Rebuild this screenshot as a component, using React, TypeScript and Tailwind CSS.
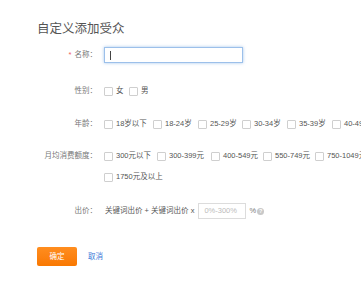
import React from "react";

const font = { fontFamily: '"Liberation Sans", "Noto Sans CJK SC", sans-serif' };

function Check({ label, w }: { label: string; w?: string }) {
  return (
    <div className={`flex items-center shrink-0 ${w ?? ""}`}>
      <span className="w-[9px] h-[9px] border border-[#cfcfcf] bg-white rounded-[1px] shrink-0" />
      <span className="ml-[3px] text-[7.5px] leading-[12px] text-[#555] whitespace-nowrap">{label}</span>
    </div>
  );
}

function Label({ children }: { children: React.ReactNode }) {
  return (
    <div className="w-[60px] shrink-0 text-right text-[7.5px] leading-[12px] text-[#777] whitespace-nowrap">
      {children}
    </div>
  );
}

export default function App() {
  return (
    <div className="w-[361px] h-[287px] bg-white overflow-hidden pl-[37px] pt-[20px]" style={font}>
      <div className="text-[12.5px] leading-[18px] h-[18px] text-[#555]">自定义添加受众</div>

      <div className="mt-[9px] flex items-center gap-[7px] h-[16px]">
        <Label>
          <span className="text-[#f06060] mr-[3px]">*</span>名称：
        </Label>
        <div className="w-[139px] h-[16px] border border-[#9cc0ea] shadow-[0_0_3px_rgba(90,150,220,0.55)] bg-white flex items-center pl-[5px]">
          <span className="w-px h-[9px] bg-[#444]" />
        </div>
      </div>

      <div className="mt-[22px] flex items-center gap-[7px] h-[12px]">
        <Label>性别：</Label>
        <div className="flex items-center gap-[4px]">
          <Check label="女" w="w-[21px]" />
          <Check label="男" />
        </div>
      </div>

      <div className="mt-[21px] flex items-center gap-[7px] h-[12px]">
        <Label>年龄：</Label>
        <div className="flex items-center">
          <Check label="18岁以下" w="w-[49px]" />
          <Check label="18-24岁" w="w-[45px]" />
          <Check label="25-29岁" w="w-[44px]" />
          <Check label="30-34岁" w="w-[45px]" />
          <Check label="35-39岁" w="w-[45px]" />
          <Check label="40-49岁" />
        </div>
      </div>

      <div className="mt-[20px] flex items-start gap-[7px]">
        <Label>月均消费额度：</Label>
        <div className="flex flex-col gap-[9px]">
          <div className="flex items-center h-[12px]">
            <Check label="300元以下" w="w-[53px]" />
            <Check label="300-399元" w="w-[54px]" />
            <Check label="400-549元" w="w-[52px]" />
            <Check label="550-749元" w="w-[52px]" />
            <Check label="750-1049元" />
          </div>
          <div className="flex items-center h-[12px]">
            <Check label="1750元及以上" />
          </div>
        </div>
      </div>

      <div className="mt-[20px] flex items-center gap-[7px] h-[16px]">
        <Label>出价：</Label>
        <div className="flex items-center text-[7.5px] leading-[12px] text-[#555] whitespace-nowrap">
          <span className="ml-[1px]">关键词出价 + 关键词出价 x</span>
          <div className="ml-[4px] w-[48px] h-[16px] border border-[#dcdcdc] bg-white flex items-center pl-[5px] text-[#bbb]">
            0%-300%
          </div>
          <span className="ml-[3px] text-[#777]">%</span>
          <span className="ml-[1px] w-[7px] h-[7px] rounded-full bg-[#c8c8c8] text-white text-[5.5px] leading-[7px] text-center font-bold">?</span>
        </div>
      </div>

      <div className="mt-[28px] flex items-center">
        <div className="w-[40px] h-[19px] rounded-[2px] bg-gradient-to-b from-[#ff8d1e] to-[#f97800] text-white text-[7.5px] leading-[19px] text-center">
          确定
        </div>
        <span className="ml-[11px] text-[7.5px] text-[#3b78d8]">取消</span>
      </div>
    </div>
  );
}
